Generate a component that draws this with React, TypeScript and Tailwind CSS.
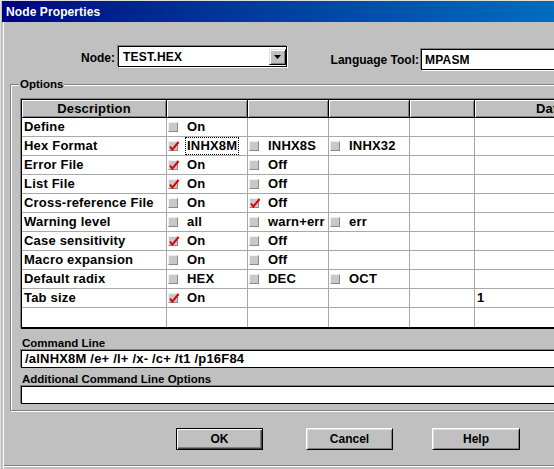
import React from "react";

type Opt = { label: string; checked: boolean; focus?: boolean };
type Row = { desc: string; cols: (Opt | null)[]; extra?: string };

const rows: Row[] = [
  { desc: "Define", cols: [{ label: "On", checked: false }, null, null] },
  {
    desc: "Hex Format",
    cols: [
      { label: "INHX8M", checked: true, focus: true },
      { label: "INHX8S", checked: false },
      { label: "INHX32", checked: false },
    ],
  },
  { desc: "Error File", cols: [{ label: "On", checked: true }, { label: "Off", checked: false }, null] },
  { desc: "List File", cols: [{ label: "On", checked: true }, { label: "Off", checked: false }, null] },
  { desc: "Cross-reference File", cols: [{ label: "On", checked: false }, { label: "Off", checked: true }, null] },
  {
    desc: "Warning level",
    cols: [
      { label: "all", checked: false },
      { label: "warn+err", checked: false },
      { label: "err", checked: false },
    ],
  },
  { desc: "Case sensitivity", cols: [{ label: "On", checked: true }, { label: "Off", checked: false }, null] },
  { desc: "Macro expansion", cols: [{ label: "On", checked: false }, { label: "Off", checked: false }, null] },
  {
    desc: "Default radix",
    cols: [
      { label: "HEX", checked: false },
      { label: "DEC", checked: false },
      { label: "OCT", checked: false },
    ],
  },
  { desc: "Tab size", cols: [{ label: "On", checked: true }, null, null], extra: "1" },
  { desc: "", cols: [null, null, null] },
];

function Check({ checked }: { checked: boolean }) {
  return (
    <span className="relative block w-[10px] h-[10px] shrink-0 bg-[#c8c8c8] border border-t-[#f0f0f0] border-l-[#f0f0f0] border-b-[#8a8a8a] border-r-[#8a8a8a]">
      {checked && (
        <svg className="absolute left-[-1px] top-[-2px]" width="12" height="12" viewBox="0 0 12 12">
          <path d="M2 6.5 L4.3 9.6 L10.6 2" fill="none" stroke="#e00000" strokeWidth="2" />
        </svg>
      )}
    </span>
  );
}

function OptCell({ opt, last }: { opt: Opt | null; last: boolean }) {
  return (
    <div
      className={`h-[19px] bg-white flex items-center pl-[1px] border-r border-[#a8a8a8] ${
        last ? "" : "border-b"
      }`}
    >
      {opt && (
        <>
          <Check checked={opt.checked} />
          {opt.focus ? (
            <span className="ml-[7px] h-full flex items-center px-[1px] border border-dotted border-black">
              {opt.label}
            </span>
          ) : (
            <span className="ml-[9px] whitespace-nowrap">{opt.label}</span>
          )}
        </>
      )}
    </div>
  );
}

function HeadCell({ children }: { children?: React.ReactNode }) {
  return (
    <div className="h-[18px] bg-[#c0c0c0] border-r border-b border-black shadow-[inset_1px_1px_0_#ffffff,inset_-1px_-1px_0_#808080] flex items-center justify-center whitespace-nowrap">
      {children}
    </div>
  );
}

function Button({ label, def, className }: { label: string; def?: boolean; className: string }) {
  return (
    <div
      className={`h-[22px] flex items-center justify-center bg-[#c0c0c0] text-[12px] ${
        def
          ? "border border-black shadow-[inset_1px_1px_0_#ffffff,inset_-1px_-1px_0_#404040,inset_-2px_-2px_0_#808080]"
          : "border border-t-white border-l-white border-b-black border-r-black shadow-[inset_1px_1px_0_#dfdfdf,inset_-1px_-1px_0_#808080]"
      } ${className}`}
    >
      {label}
    </div>
  );
}

export default function App() {
  return (
    <div className="w-[554px] h-[469px] overflow-hidden bg-[#c0c0c0] font-['Liberation_Sans',Arial,sans-serif] font-bold text-black">
      <div className="w-[700px] h-[469px] border-t border-l border-[#dfdfdf] flex flex-col">
        {/* Title bar */}
        <div className="ml-[1px] h-[21px] shrink-0 bg-linear-to-r from-[#000080] to-[#1084d0] flex items-center pl-[4px] pt-[1px] text-white text-[12px] tracking-[0.1px]">
          Node Properties
        </div>

        {/* Body */}
        <div className="ml-[2px] flex-1 border-l border-white flex flex-col">
          {/* Node / Language row */}
          <div className="flex items-start mt-[24px]">
            <div className="w-[111px] h-[21px] text-right text-[12px] leading-[16px] pt-[4px]">Node:</div>
            <div className="ml-[3px] w-[169px] h-[21px] bg-white border border-black shadow-[-1px_-1px_0_#808080,1px_1px_0_#ffffff] flex items-center pl-[4px] text-[12px] tracking-[0.25px]">
              <span className="flex-1">TEST.HEX</span>
              <div className="w-[17px] h-[16px] bg-[#c0c0c0] border border-t-[#dfdfdf] border-l-[#dfdfdf] border-b-black border-r-black shadow-[inset_1px_1px_0_#ffffff,inset_-1px_-1px_0_#808080] flex items-center justify-center">
                <svg width="7" height="4" viewBox="0 0 7 4">
                  <polygon points="0,0 7,0 3.5,4" fill="#000" />
                </svg>
              </div>
            </div>
            <div className="w-[132px] h-[21px] mt-[3px] text-right text-[12px] leading-[16px] pt-[3px]">
              Language Tool:
            </div>
            <div className="ml-[2px] mt-[3px] w-[260px] h-[21px] bg-white border border-black shadow-[-1px_-1px_0_#808080,1px_1px_0_#ffffff] flex items-center pl-[3px] text-[12px] tracking-[0.2px]">
              MPASM
            </div>
          </div>

          {/* Options group */}
          <div className="relative ml-[6px] mt-[14px] w-[680px] border border-[#808080] shadow-[inset_1px_1px_0_#ffffff,1px_1px_0_#ffffff] pl-[10px] pt-[14px] pb-[6px]">
            <div className="absolute left-[8px] top-[-7px] px-[1px] bg-[#c0c0c0] text-[11.5px] leading-[13px]">
              Options
            </div>

            {/* Table */}
            <div className="w-max border-l border-t border-b-2 border-black shadow-[-1px_-1px_0_#808080] text-[13px] tracking-[0.2px]">
              <div className="grid grid-cols-[145px_81px_81px_81px_65px_152px]">
                <HeadCell>Description</HeadCell>
                <HeadCell />
                <HeadCell />
                <HeadCell />
                <HeadCell />
                <HeadCell>Data</HeadCell>
                {rows.map((r, i) => {
                  const last = i === rows.length - 1;
                  const bb = last ? "" : "border-b";
                  return (
                    <React.Fragment key={i}>
                      <div
                        className={`h-[19px] bg-white flex items-center pl-[2px] border-r border-[#a8a8a8] whitespace-nowrap ${bb}`}
                      >
                        {r.desc}
                      </div>
                      {r.cols.map((c, j) => (
                        <OptCell key={j} opt={c} last={last} />
                      ))}
                      <div className={`h-[19px] bg-white border-r border-[#a8a8a8] ${bb}`} />
                      <div className={`h-[19px] bg-white flex items-center pl-[2px] border-r border-[#a8a8a8] ${bb}`}>
                        {r.extra ?? ""}
                      </div>
                    </React.Fragment>
                  );
                })}
              </div>
            </div>

            {/* Command line */}
            <div className="mt-[8px] pl-[1px] text-[11.5px] leading-[13px]">Command Line</div>
            <div className="w-[650px] h-[18px] bg-white border border-black shadow-[-1px_-1px_0_#808080] flex items-center pl-[3px] text-[13px] tracking-[0.2px] whitespace-nowrap">
              /alNHX8M /e+ /l+ /x- /c+ /t1 /p16F84
            </div>
            <div className="mt-[5px] pl-[1px] text-[11.5px] leading-[13px]">Additional Command Line Options</div>
            <div className="w-[650px] h-[18px] bg-white border border-black shadow-[-1px_-1px_0_#808080]" />
          </div>

          {/* Buttons */}
          <div className="flex mt-[17px]">
            <Button label="OK" def className="ml-[172px] w-[87px]" />
            <Button label="Cancel" className="ml-[43px] w-[87px]" />
            <Button label="Help" className="ml-[39px] w-[88px]" />
          </div>

          <div className="mt-[15px] h-[1px] bg-[#808080]" />
          <div className="h-[1px] bg-white" />
        </div>
      </div>
    </div>
  );
}
